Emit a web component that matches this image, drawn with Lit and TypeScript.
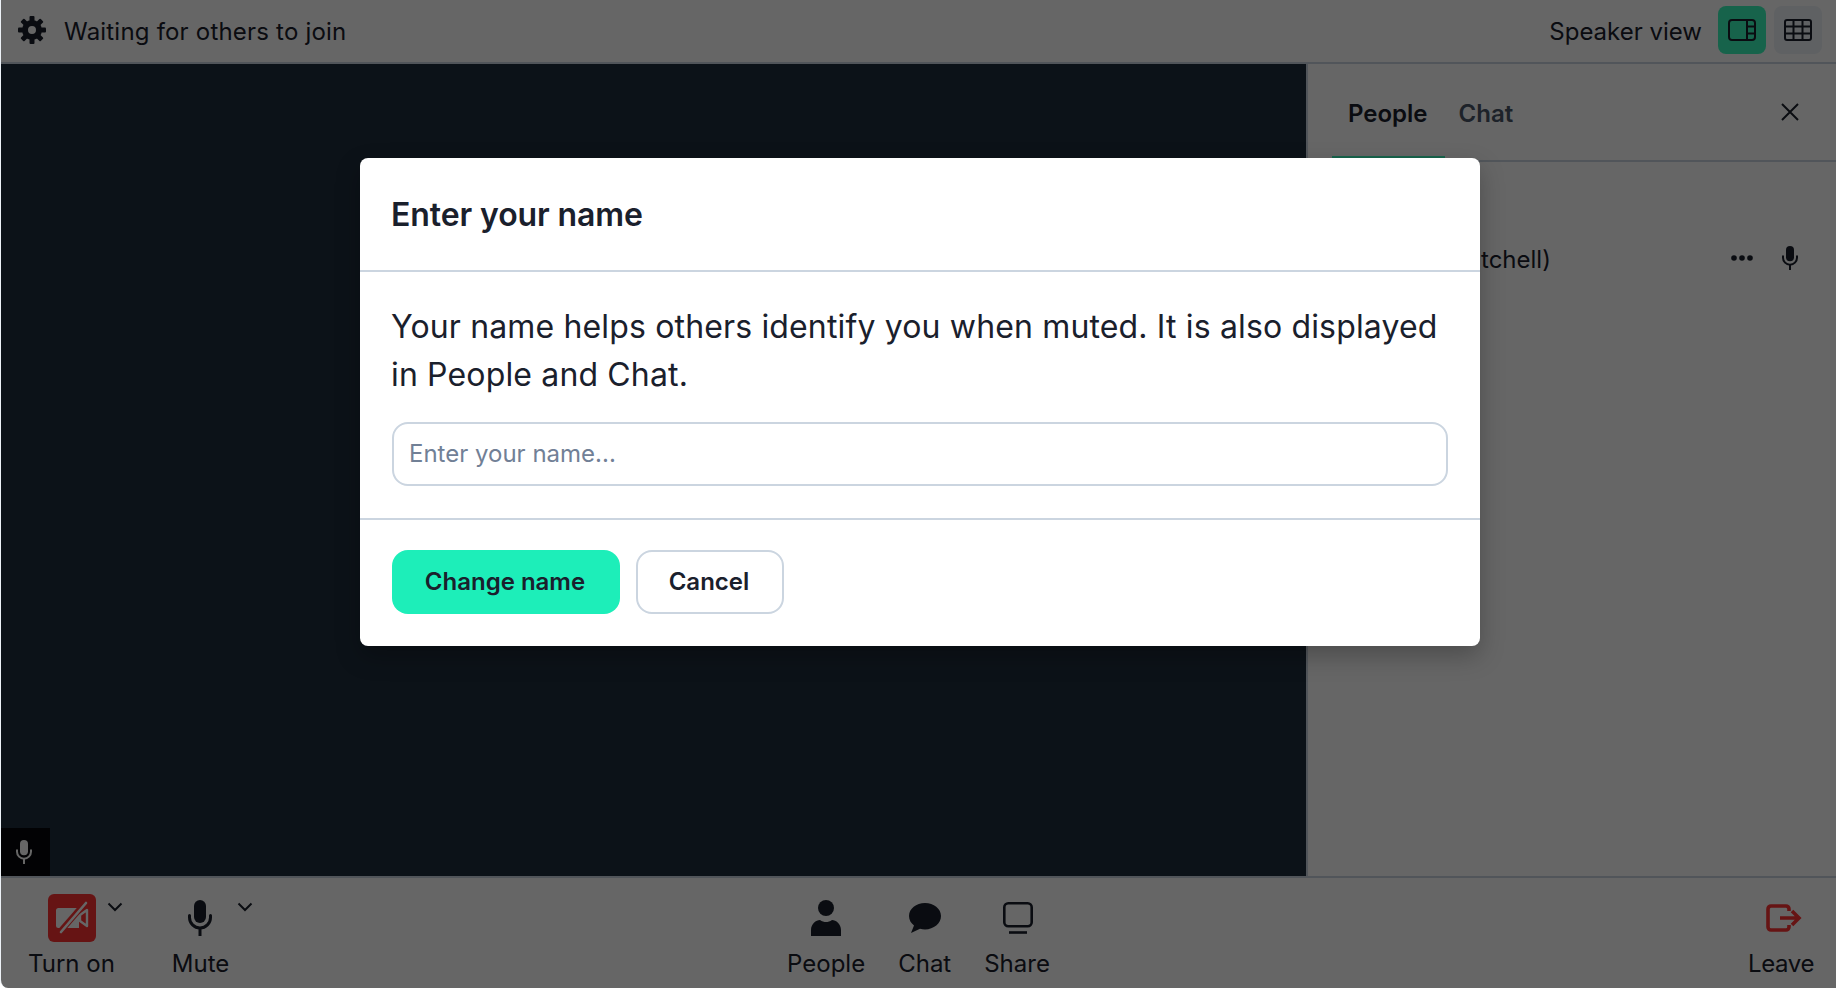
import { LitElement, html, css, svg } from "lit";
import { customElement } from "lit/decorators.js";

const mic = (cls: string) => html`<svg class=${cls} viewBox="0 0 24 36" fill="none">
  <rect x="6" y="0" width="12" height="23" rx="6" fill="currentColor"/>
  <path d="M1.5 15.5v2a10.5 10.5 0 0 0 21 0v-2" stroke="currentColor" stroke-width="3" stroke-linecap="round"/>
  <path d="M12 28v8" stroke="currentColor" stroke-width="3"/>
</svg>`;

const chevron = html`<svg class="chev" viewBox="0 0 16 10" fill="none"><path d="M1.5 1.5 8 8l6.5-6.5" stroke="currentColor" stroke-width="2"/></svg>`;

const teeth = [0, 45, 90, 135, 180, 225, 270, 315].map(
  (a) => svg`<rect x="11.5" y="0" width="5" height="7" rx="1" fill="currentColor" transform="rotate(${a} 14 14)"/>`
);

@customElement("app-root")
export class AppRoot extends LitElement {
  static styles = css`
    :host { display: block; font-family: Inter, "Liberation Sans", sans-serif; color: #1a202c; background: #fff; }
    * { box-sizing: border-box; }
    .page { position: relative; height: 988px; display: flex; flex-direction: column; overflow: hidden; border-radius: 0 0 0 8px; background: #fff; border-left: 1px solid #edf2f7; }
    .top { height: 64px; flex: none; display: flex; align-items: center; border-bottom: 2px solid #cbd5e0; padding: 0 14px 0 17px; }
    .gear { width: 28px; height: 28px; color: #1a202c; flex: none; margin-top: -2px; }
    .status { margin-left: 18px; font-size: 24px; letter-spacing: 0.2px; flex: 1; }
    .view-label { font-size: 24px; margin-right: 16px; }
    .view { width: 48px; height: 48px; border-radius: 8px; display: flex; align-items: center; justify-content: center; margin-top: -2px; }
    .view.on { background: #3bf8bb; }
    .view.off { background: #edf2f7; margin-left: 8px; }
    .view svg { width: 28px; height: 22px; }
    .mid { flex: 1; min-height: 0; display: flex; }
    .video { flex: 1; background: #1f2d3d; position: relative; display: flex; align-items: flex-end; }
    .tile-mic { width: 49px; height: 48px; background: #05070a; color: #fff; display: flex; align-items: center; justify-content: center; padding-right: 4px; }
    .tile-mic svg { width: 16px; height: 24px; }
    .panel { width: 530px; flex: none; border-left: 2px solid #cbd5e0; display: flex; flex-direction: column; }
    .tabs { height: 98px; border-bottom: 2px solid #cbd5e0; display: flex; align-items: flex-start; padding: 0 0 0 24px; flex: none; }
    .tab { height: 94px; padding: 6px 17px 0 16px; font-size: 24px; font-weight: 600; display: flex; align-items: center; border-bottom: 2px solid transparent; }
    .tab.active { border-bottom-color: #3bf8bb; }
    .tab.muted { color: #4a5568; padding-left: 14px; }
    .close { margin-left: auto; width: 18px; height: 18px; align-self: center; margin-right: 37px; }
    .person { display: flex; align-items: center; height: 48px; margin-top: 72px; padding-right: 38px; }
    .person-name { font-size: 24px; margin-left: 87px; padding-top: 2px; white-space: nowrap; flex: 1; }
    .dots { width: 22px; height: 6px; margin-right: 29px; }
    .person-mic { width: 16px; height: 24px; }
    .bottom { height: 112px; flex: none; border-top: 2px solid #cbd5e0; display: grid; grid-template-columns: 1fr auto 1fr; padding: 0 22px; }
    .group { display: flex; gap: 33px; }
    .group.left { gap: 57px; padding-left: 5px; }
    .group.right { justify-content: flex-end; }
    .item { position: relative; display: flex; flex-direction: column; align-items: center; font-size: 24px; }
    .icon-box { height: 48px; margin-top: 16px; margin-bottom: 7px; display: flex; align-items: center; justify-content: center; }
    .item-label { line-height: 30px; }
    .item-label.tight { letter-spacing: -0.4px; }
    .chev { position: absolute; width: 16px; height: 10px; top: 24px; left: calc(50% + 36px); }
    .cam { width: 48px; height: 48px; margin-left: 1px; background: #ff3333; border-radius: 6px; display: flex; align-items: center; justify-content: center; color: #fff; }
    .cam svg { width: 38px; height: 36px; }
    .i-mic { width: 24px; height: 36px; margin-right: 1px; }
    .i-person { width: 32px; height: 36px; }
    .i-chat { width: 32px; height: 32px; }
    .i-share { width: 30px; height: 32px; margin-left: 1px; }
    .i-leave { width: 36px; height: 28px; color: #ff3333; margin-left: 6px; }
    .overlay { position: absolute; inset: 0; background: rgba(0, 0, 0, 0.6); padding: 158px 0 0 359px; }
    .modal { width: 1120px; height: 488px; background: #fff; border-radius: 8px; box-shadow: 0 10px 25px rgba(0, 0, 0, 0.25); display: flex; flex-direction: column; }
    .m-head { height: 114px; flex: none; border-bottom: 2px solid #cbd5e0; padding: 0 32px 0 31px; display: flex; align-items: center; }
    h2 { margin: 0; font-size: 32px; font-weight: 600; letter-spacing: -0.1px; }
    .m-body { height: 248px; flex: none; border-bottom: 2px solid #cbd5e0; padding: 31px 32px 0; }
    p { margin: 0 0 0 -1px; font-size: 32px; line-height: 48px; letter-spacing: 0.15px; }
    input { display: block; margin-top: 23px; width: 100%; height: 64px; border: 2px solid #cbd5e0; border-radius: 16px; padding: 0 15px 2px; font: inherit; font-size: 24px; color: #1a202c; background: #fff; outline: none; }
    input::placeholder { color: #718096; opacity: 1; }
    .m-foot { flex: 1; padding: 30px 32px 0; display: flex; gap: 16px; align-items: flex-start; }
    button { height: 64px; border-radius: 16px; font: inherit; font-size: 24px; font-weight: 600; color: #1a202c; padding: 0 2px 1px 0; }
    .primary { width: 228px; background: #1deeb9; border: none; }
    .secondary { width: 148px; background: #fff; border: 2px solid #cbd5e0; }
  `;

  render() {
    return html`<div class="page">
      <header class="top">
        <svg class="gear" viewBox="0 0 28 28">${teeth}<circle cx="14" cy="14" r="7" fill="none" stroke="currentColor" stroke-width="6"/></svg>
        <span class="status">Waiting for others to join</span>
        <span class="view-label">Speaker view</span>
        <div class="view on"><svg viewBox="0 0 28 22" fill="none" stroke="#1a202c" stroke-width="2"><rect x="1" y="1" width="26" height="20" rx="3"/><path d="M19 1v20M19 7.500h8M19 14.500h8"/></svg></div>
        <div class="view off"><svg viewBox="0 0 28 22" fill="none" stroke="#1a202c" stroke-width="2"><rect x="1" y="1" width="26" height="20" rx="2"/><path d="M1 7.500h26M1 14.500h26M9.500 1v20M18.500 1v20"/></svg></div>
      </header>
      <div class="mid">
        <div class="video"><div class="tile-mic">${mic("")}</div></div>
        <aside class="panel">
          <div class="tabs">
            <div class="tab active">People</div>
            <div class="tab muted">Chat</div>
            <svg class="close" viewBox="0 0 18 18" fill="none" stroke="#1a202c" stroke-width="2"><path d="M1 1l16 16M17 1 1 17"/></svg>
          </div>
          <div class="person">
            <span class="person-name">You (Mitchell)</span>
            <svg class="dots" viewBox="0 0 22 6" fill="#1a202c"><circle cx="3" cy="3" r="2.800"/><circle cx="11" cy="3" r="2.800"/><circle cx="19" cy="3" r="2.800"/></svg>
            ${mic("person-mic")}
          </div>
        </aside>
      </div>
      <footer class="bottom">
        <div class="group left">
          <div class="item">
            <div class="icon-box"><div class="cam"><svg viewBox="0 0 38 36" fill="none">
              <path d="M3 10.500a2.500 2.500 0 0 1 2.500-2.500H26v20H5.500A2.500 2.500 0 0 1 3 25.500z" fill="currentColor"/>
              <path d="M27 15l7-5v16l-7-5z" stroke="currentColor" stroke-width="2.400" stroke-linejoin="round"/>
              <path d="M6 33 33 2" stroke="#ff3333" stroke-width="6"/>
              <path d="M8 32 33 3" stroke="currentColor" stroke-width="2.600" stroke-linecap="round"/>
            </svg></div></div>
            <span class="item-label">Turn on</span>${chevron}
          </div>
          <div class="item">
            <div class="icon-box">${mic("i-mic")}</div>
            <span class="item-label">Mute</span>${chevron}
          </div>
        </div>
        <div class="group">
          <div class="item">
            <div class="icon-box"><svg class="i-person" viewBox="0 0 32 36" fill="currentColor"><circle cx="16" cy="8" r="8"/><path d="M1 36v-6c0-6 5-10 9-10 2 1.500 4 2 6 2s4-.5 6-2c4 0 9 4 9 10v6z"/></svg></div>
            <span class="item-label">People</span>
          </div>
          <div class="item">
            <div class="icon-box"><svg class="i-chat" viewBox="0 0 32 32" fill="currentColor"><path d="M16 1C7.200 1 0 6.600 0 14c0 4 2 7.200 5 9.500L2 31l9-4.200c1.600.4 3.300.6 5 .6 8.800 0 16-6 16-13.400S24.800 1 16 1z"/></svg></div>
            <span class="item-label">Chat</span>
          </div>
          <div class="item">
            <div class="icon-box"><svg class="i-share" viewBox="0 0 30 32" fill="none" stroke="currentColor" stroke-width="2.600"><rect x="1.300" y="1.300" width="27.400" height="23" rx="4"/><path d="M6 30.500h18"/></svg></div>
            <span class="item-label">Share</span>
          </div>
        </div>
        <div class="group right">
          <div class="item">
            <div class="icon-box"><svg class="i-leave" viewBox="0 0 36 28" fill="none" stroke="currentColor" stroke-width="3.600"><path d="M23 7V5a3 3 0 0 0-3-3H5a3 3 0 0 0-3 3v18a3 3 0 0 0 3 3h15a3 3 0 0 0 3-3v-2"/><path d="M14 14h19M26 7l7 7-7 7"/></svg></div>
            <span class="item-label tight">Leave</span>
          </div>
        </div>
      </footer>
      <div class="overlay">
        <section class="modal">
          <div class="m-head"><h2>Enter your name</h2></div>
          <div class="m-body">
            <p>Your name helps others identify you when muted. It is also displayed in People and Chat.</p>
            <input type="text" placeholder="Enter your name..." />
          </div>
          <div class="m-foot">
            <button class="primary">Change name</button>
            <button class="secondary">Cancel</button>
          </div>
        </section>
      </div>
    </div>`;
  }
}
